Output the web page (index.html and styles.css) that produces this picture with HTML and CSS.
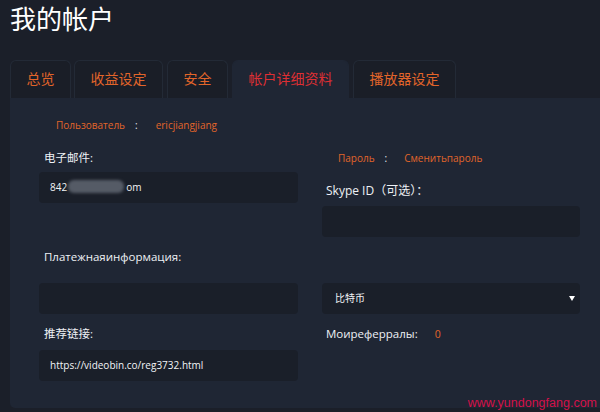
FILE: index.html
```html
<!DOCTYPE html>
<html lang="zh">
<head>
<meta charset="utf-8">
<title>我的帐户</title>
<link rel="stylesheet" href="styles.css">
</head>
<body>
<h1 class="title">我的帐户</h1>
<ul class="tabs">
  <li class="tab">总览</li>
  <li class="tab">收益设定</li>
  <li class="tab">安全</li>
  <li class="tab active">帐户详细资料</li>
  <li class="tab">播放器设定</li>
</ul>
<div class="panel">
  <div class="col col-left">
    <div class="info user"><span>Пользователь</span><span class="colon">:</span><span>ericjiangjiang</span></div>
    <div class="label l-email">电子邮件:</div>
    <div class="field f-email">842<span class="blur"></span>om</div>
    <div class="label l-pay">Платежнаяинформация:</div>
    <div class="field f-pay"></div>
    <div class="label l-ref">推荐链接:</div>
    <div class="field f-ref">https://videobin.co/reg3732.html</div>
  </div>
  <div class="col col-right">
    <div class="info pass"><span>Пароль</span><span class="colon">:</span><span>Сменитьпароль</span></div>
    <div class="label l-skype">Skype ID（可选）：</div>
    <div class="field f-skype"></div>
    <div class="field select">比特币<span class="arrow"></span></div>
    <div class="label l-refs">Моиреферралы:<span class="count">0</span></div>
  </div>
</div>
<div class="watermark">www.yundongfang.com</div>
</body>
</html>
```
FILE: styles.css
```css
html, body {
  margin: 0;
  padding: 0;
  background: #1b1f29;
  width: 600px;
  height: 412px;
  overflow: hidden;
  font-family: "Open Sans", "Noto Sans CJK SC", sans-serif;
  color: #e8ecf2;
}
body { position: relative; }

.title {
  margin: 0;
  padding: 2px 0 0 10px;
  height: 58px;
  box-sizing: border-box;
  font-size: 26px;
  font-weight: 400;
  line-height: 34px;
  color: #ffffff;
}

.tabs {
  list-style: none;
  margin: 2px 0 0;
  padding: 0 0 0 10px;
  display: flex;
  gap: 4px;
  height: 38px;
}
.tab {
  padding: 0 15.5px;
  height: 38px;
  box-sizing: border-box;
  border: 1px solid #232a36;
  border-bottom: none;
  border-radius: 6px 6px 0 0;
  font-size: 14px;
  line-height: 36px;
  color: #e2652a;
  background: #1a1e27;
}
.tab:nth-child(2) { margin-left: -1px; }
.tab.active {
  background: #1f2634;
  border-color: #1f2634;
  color: #de2f33;
}

.panel {
  margin-left: 10px;
  height: 310px;
  background: #1f2634;
  border-radius: 0 0 0 5px;
  display: flex;
  padding-left: 29px;
  gap: 24px;
}
.col {
  display: flex;
  flex-direction: column;
}
.col-left { width: 259px; }
.col-right { width: 258px; }

.info {
  height: 20px;
  line-height: 20px;
  font-size: 10px;
  color: #e2652a;
  display: flex;
}
.info .colon { color: #e8ecf2; }
.user { margin-top: 17px; padding-left: 17px; }
.user .colon { margin: 0 18px 0 10px; }
.pass { margin-top: 50px; padding-left: 16px; }
.pass .colon { margin: 0 17px 0 10px; }

.label {
  height: 20px;
  line-height: 20px;
  font-size: 11.5px;
  color: #eef1f5;
  padding-left: 5px;
}
.l-email { margin-top: 13px; }
.l-pay { margin-top: 44px; }
.l-ref { margin-top: 10px; }
.l-skype { margin-top: 13px; padding-left: 4px; font-size: 12px; }
.l-refs { margin-top: 10px; padding-left: 4px; }
.count { color: #e2652a; margin-left: 17px; font-size: 10.5px; }

.field {
  height: 31px;
  box-sizing: border-box;
  background: #1a1f29;
  border-radius: 4px;
  padding-left: 11px;
  line-height: 31px;
  font-size: 10px;
  color: #f2f4f7;
}
.f-email { margin-top: 4px; }
.f-pay { margin-top: 16px; }
.f-ref { margin-top: 6px; }
.f-skype { margin-top: 5px; }
.select {
  margin-top: 46px;
  position: relative;
  padding-left: 13px;
}
.arrow {
  position: absolute;
  right: 5px;
  top: 13px;
  width: 0;
  height: 0;
  border-left: 3px solid transparent;
  border-right: 3px solid transparent;
  border-top: 5px solid #ffffff;
}
.blur {
  display: inline-block;
  width: 56px;
  height: 13px;
  vertical-align: -2px;
  margin: 0 2px 0 1px;
  background: #555b66;
  border-radius: 6px;
  filter: blur(1.5px);
}

.watermark {
  position: absolute;
  right: 3px;
  bottom: 2px;
  font-family: "Liberation Sans", Arial, sans-serif;
  font-size: 12.5px;
  color: #d4114a;
}
```
